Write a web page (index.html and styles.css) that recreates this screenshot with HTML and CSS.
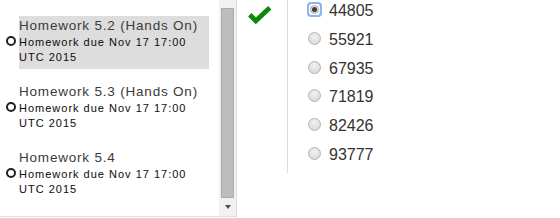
FILE: index.html
```html
<!DOCTYPE html>
<html lang="en">
<head>
<meta charset="utf-8">
<title>Homework</title>
<link rel="stylesheet" href="styles.css">
</head>
<body>
<div class="page">
  <div class="list-panel">
    <div class="list-viewport">
      <ul class="hw-list">
        <li class="hw-item">
          <span class="ring"></span>
          <div class="hw-text selected">
            <div class="hw-title">Homework 5.2 (Hands On)</div>
            <div class="hw-due">Homework due Nov 17 17:00 UTC 2015</div>
          </div>
        </li>
        <li class="hw-item">
          <span class="ring"></span>
          <div class="hw-text">
            <div class="hw-title">Homework 5.3 (Hands On)</div>
            <div class="hw-due">Homework due Nov 17 17:00 UTC 2015</div>
          </div>
        </li>
        <li class="hw-item">
          <span class="ring"></span>
          <div class="hw-text">
            <div class="hw-title">Homework 5.4</div>
            <div class="hw-due">Homework due Nov 17 17:00 UTC 2015</div>
          </div>
        </li>
      </ul>
    </div>
    <div class="scrollbar">
      <div class="thumb"></div>
      <div class="arrow-box"><span class="arrow"></span></div>
    </div>
  </div>
  <div class="status">
    <svg class="check" width="24" height="19" viewBox="0 0 24 19">
      <path d="M1.8 8.8 L7.8 14.8 L21.8 1.8" fill="none" stroke="#0b870b" stroke-width="4.8"/>
    </svg>
  </div>
  <div class="options">
    <label class="opt"><input type="radio" name="ans" class="radio focused" checked><span class="opt-text">44805</span></label>
    <label class="opt"><input type="radio" name="ans" class="radio"><span class="opt-text">55921</span></label>
    <label class="opt"><input type="radio" name="ans" class="radio"><span class="opt-text">67935</span></label>
    <label class="opt"><input type="radio" name="ans" class="radio"><span class="opt-text">71819</span></label>
    <label class="opt"><input type="radio" name="ans" class="radio"><span class="opt-text">82426</span></label>
    <label class="opt"><input type="radio" name="ans" class="radio"><span class="opt-text">93777</span></label>
  </div>
</div>
</body>
</html>
```

FILE: styles.css
```css
* { box-sizing: border-box; }
html, body { margin: 0; padding: 0; background: #fff; }
body { font-family: "Liberation Sans", Arial, sans-serif; }

.page {
  display: flex;
  align-items: flex-start;
  width: 560px;
  height: 218px;
  overflow: hidden;
}

/* left list */
.list-panel {
  display: flex;
  width: 237px;
  height: 217px;
  border-right: 1px solid #dedede;
  border-bottom: 1px solid #dedede;
  flex: none;
}
.list-viewport {
  width: 219px;
  overflow: hidden;
}
.hw-list {
  list-style: none;
  margin: 0;
  padding: 16px 0 0 6px;
}
.hw-item {
  display: flex;
  align-items: center;
  gap: 3px;
  margin-bottom: 13px;
}
.ring {
  flex: none;
  width: 10px;
  height: 10px;
  border: 2px solid #222;
  border-radius: 50%;
  margin-bottom: 3px;
}
.hw-text {
  width: 190px;
  padding: 0 0 4px 0;
}
.hw-text.selected { background: #dddddd; }
.hw-title {
  font-size: 13.5px;
  line-height: 19px;
  letter-spacing: 0.8px;
  color: #3a3a3a;
}
.hw-due {
  font-size: 11px;
  line-height: 15px;
  letter-spacing: 1px;
  color: #111;
  -webkit-text-stroke: 0.05px #111;
}

/* fake scrollbar */
.scrollbar {
  width: 17px;
  height: 216px;
  background: #f1f1f1;
  display: flex;
  flex-direction: column;
  flex: none;
}
.thumb {
  margin: 8px 2px 0 2px;
  height: 190px;
  background: #bdbdbd;
  border: 1px solid #ababab;
}
.arrow-box {
  flex: 1;
  display: flex;
  justify-content: center;
  align-items: center;
}
.arrow {
  width: 0;
  height: 0;
  border-left: 3.5px solid transparent;
  border-right: 3.5px solid transparent;
  border-top: 4px solid #505050;
  margin-left: 1px;
}

/* status column */
.status {
  width: 50px;
  flex: none;
  padding: 6px 0 0 11px;
}
.check { display: block; }

/* options */
.options {
  border-left: 1px solid #dcdcdc;
  height: 173px;
  padding-left: 20px;
  display: flex;
  flex-direction: column;
}
.opt {
  display: flex;
  align-items: flex-start;
  height: 29px;
  gap: 8px;
}
.radio {
  -webkit-appearance: none;
  appearance: none;
  margin: 3px 0 0 0;
  width: 13px;
  height: 13px;
  border-radius: 50%;
  border: 1px solid #b4b4b4;
  background: radial-gradient(circle at 50% 35%, #f2f2f2 0%, #dcdcdc 70%, #cfcfcf 100%);
  position: relative;
  flex: none;
}
.radio:checked::after {
  content: "";
  position: absolute;
  left: 3px;
  top: 3px;
  width: 5px;
  height: 5px;
  border-radius: 50%;
  background: #3a3a3a;
}
.radio.focused {
  outline: 2px solid #8fb4ee;
  outline-offset: -1px;
  border-radius: 3px;
  background: #fff;
  border: 1px solid #8fb4ee;
}
.radio.focused::before {
  content: "";
  position: absolute;
  left: 1px;
  top: 1px;
  width: 9px;
  height: 9px;
  border-radius: 50%;
  border: 1px solid #a8a8a8;
  background: radial-gradient(circle at 50% 35%, #f2f2f2 0%, #d8d8d8 100%);
  box-sizing: border-box;
}
.opt-text {
  font-size: 16px;
  line-height: 19px;
  padding-top: 1px;
  color: #333;
}
```
